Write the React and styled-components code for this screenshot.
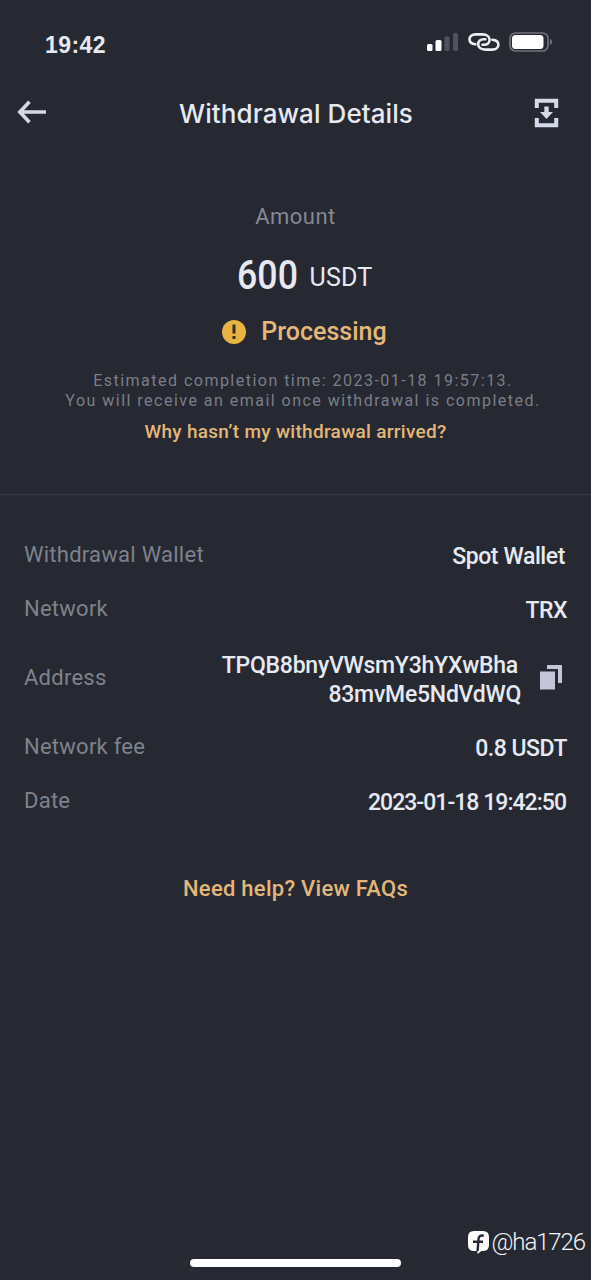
import styled, { createGlobalStyle } from "styled-components";

const GlobalStyle = createGlobalStyle`
  * {
    box-sizing: border-box;
  }
  body {
    margin: 0;
    background: #262932;
  }
  p, h1 {
    margin: 0;
  }
  svg {
    display: block;
    flex: none;
  }
`;

const Screen = styled.main`
  display: flex;
  flex-direction: column;
  width: 591px;
  height: 1280px;
  overflow: hidden;
  background: #262932;
  color: #e6e9f1;
  font-family: Roboto, "Liberation Sans", sans-serif;
  white-space: nowrap;
`;

const StatusBar = styled.div`
  display: flex;
  align-items: center;
  justify-content: space-between;
  height: 84px;
  padding: 0 38px 0 45px;
`;

const Clock = styled.span`
  padding-top: 6px;
  font: 700 23px "Liberation Sans", sans-serif;
  letter-spacing: 0.45px;
`;

const StatusIcons = styled.div`
  display: flex;
  align-items: center;
  gap: 9px;
`;

const Header = styled.header`
  display: flex;
  align-items: center;
  justify-content: space-between;
  height: 58px;
  padding: 0 31px 0 17px;
`;

const Title = styled.h1`
  padding-left: 11px;
  font: 500 26px Inter, sans-serif;
  letter-spacing: 0.07px;
`;

const IconButton = styled.button`
  padding: ${(props) => props.$pad || "0 0 2px"};
  border: none;
  background: none;
  color: #d5daea;
`;

const Summary = styled.section`
  display: flex;
  flex-direction: column;
  align-items: center;
  height: 353px;
  padding-top: 62px;
  border-bottom: 1px solid #373a43;
`;

const AmountLabel = styled.p`
  font-size: 22px;
  line-height: 26px;
  letter-spacing: 0.45px;
  color: #858894;
`;

const Amount = styled.p`
  display: flex;
  align-items: center;
  gap: 12px;
  margin-top: 20px;
  padding-left: 18px;
  line-height: 50px;
`;

/* condensed numerals: the negative margin takes up the squeezed width */
const Figure = styled.span`
  margin: -3px 0 0 -9px;
  font-size: 41px;
  font-weight: 500;
  transform: scaleX(0.87);
  transform-origin: right;
`;

const Currency = styled.span`
  padding-top: 3px;
  font-size: 25px;
  letter-spacing: 0.2px;
`;

const Status = styled.p`
  display: flex;
  align-items: center;
  gap: 15px;
  margin-top: 12px;
  padding-left: 18px;
  font-size: 25px;
  font-weight: 500;
  line-height: 34px;
  color: #e5b779;
`;

const Hint = styled.p`
  margin-top: 22px;
  padding-left: 15px;
  text-align: center;
  font-size: 16px;
  line-height: 20px;
  letter-spacing: 1.48px;
  color: #7b7e88;
`;

const Link = styled.a`
  margin-top: ${(props) => props.$top};
  align-self: center;
  font-size: ${(props) => props.$size};
  font-weight: 500;
  line-height: 26px;
  letter-spacing: ${(props) => props.$spacing};
  color: #e3b67a;
`;

const Details = styled.dl`
  display: flex;
  flex-direction: column;
  margin: 0;
  padding: 33px 24px 0;
`;

const Row = styled.div`
  display: flex;
  align-items: center;
  justify-content: space-between;
  height: ${(props) => (props.$tall ? "83px" : "54.5px")};
`;

const Label = styled.dt`
  padding-bottom: 2px;
  font-size: 22px;
  letter-spacing: 0.25px;
  color: #7f828c;
`;

const Value = styled.dd`
  display: flex;
  align-items: center;
  gap: 19px;
  margin: 0;
  padding: 2px ${(props) => props.$inset || "0"} 0 0;
  font-size: 23px;
  font-weight: 500;
  line-height: 29px;
  letter-spacing: ${(props) => props.$spacing || "-0.5px"};
  text-align: right;
`;

const AddressLine = styled.span`
  display: block;

  &:first-child {
    padding-right: 3px;
  }
`;

const CopyButton = styled(IconButton)`
  margin-right: 5px;
`;

const Footer = styled.footer`
  display: flex;
  flex-direction: column;
  margin-top: auto;
`;

const Credit = styled.div`
  display: flex;
  align-items: center;
  align-self: flex-end;
  gap: 2px;
  padding-right: 6px;
  font: 300 24px/30px Roboto, sans-serif;
  letter-spacing: -1.1px;
  color: #f4f5f8;
`;

const HomeBar = styled.div`
  width: 211px;
  height: 8px;
  margin: 2px 0 13px 190px;
  border-radius: 4px;
  background: #fff;
`;

function SignalIcon() {
  return (
    <svg width="32" height="19" viewBox="0 0 32 19">
      <rect x="0" y="11" width="5.5" height="7" rx="1.5" fill="#fff" />
      <rect x="8.5" y="7" width="6" height="11" rx="1.5" fill="#fff" />
      <rect x="17.5" y="3.5" width="5" height="14.5" rx="1.5" fill="#50535c" />
      <rect x="26" y="0" width="5" height="18" rx="1.5" fill="#50535c" />
    </svg>
  );
}

function ChainIcon() {
  return (
    <svg
      width="32"
      height="18"
      viewBox="0 0 32 18"
      fill="none"
      stroke="#eceef4"
      strokeWidth="2.6"
      strokeLinecap="round"
    >
      <path d="M7.5 11.3C3.8 11 1.5 9 1.5 6.3C1.5 3.3 4 1.4 7.5 1.4H14.5C18.8 1.4 21.6 3.7 21.6 6.8C21.6 9.9 19.3 11.8 16 11.8H14.5" />
      <path d="M24.3 6.7C28 7 30.4 9 30.4 11.7C30.4 14.7 27.8 16.6 24.3 16.6H17.3C13 16.6 10.2 14.3 10.2 11.2C10.2 8.1 12.5 6.2 15.8 6.2H17.3" />
    </svg>
  );
}

function BatteryIcon() {
  return (
    <svg width="44" height="20" viewBox="0 0 44 20">
      <rect x="1" y="1" width="38" height="18" rx="5.5" fill="none" stroke="#70737c" strokeWidth="1.7" />
      <rect x="3" y="3" width="31.5" height="14" rx="3.5" fill="#fff" />
      <path d="M41 7C43.8 8 43.8 12 41 13Z" fill="#70737c" />
    </svg>
  );
}

function BackIcon() {
  return (
    <svg width="30" height="24" viewBox="0 0 30 24" fill="none" stroke="currentColor" strokeWidth="3.6">
      <path d="M12.5 1.8L2.8 12L12.5 22.2M3 12H29" />
    </svg>
  );
}

function SaveIcon() {
  return (
    <svg width="26" height="30" viewBox="0 0 26 30">
      <path
        d="M2.8 10V2.8H22.2V10M2.8 20V27.2H22.2V20"
        fill="none"
        stroke="currentColor"
        strokeWidth="4"
      />
      <path d="M10.3 8.5H14.7V14H19L12.5 21L6 14H10.3Z" fill="currentColor" />
    </svg>
  );
}

function PendingIcon() {
  return (
    <svg width="24" height="24" viewBox="0 0 24 24">
      <circle cx="12" cy="12" r="12" fill="#e8b340" />
      <path d="M10.5 4.5H13.5V13.5H10.5ZM10.5 16H13.5V19H10.5Z" fill="#30302f" />
    </svg>
  );
}

function CopyIcon() {
  return (
    <svg width="22" height="25" viewBox="0 0 22 25" fill="#c3c6d8">
      <path d="M7 0H22V18H18V4H7Z" />
      <rect x="0" y="6.5" width="15" height="18" />
    </svg>
  );
}

function CreditLogo() {
  return (
    <svg width="21" height="23" viewBox="0 0 21 23">
      <path
        d="M6 0H15Q21 0 21 6V14Q21 19.5 15.5 20H13.5L9.5 23V20H6Q0 20 0 14V6Q0 0 6 0Z"
        fill="#fff"
      />
      <path
        d="M15.8 4.8C12.3 3.8 10.9 5 10.5 8L9.6 20M5 10.7H15"
        fill="none"
        stroke="#262932"
        strokeWidth="2.4"
      />
    </svg>
  );
}

const details = [
  {
    label: "Withdrawal Wallet",
    value: "Spot Wallet",
    spacing: "-0.4px",
    inset: "2px",
  },
  { label: "Network", value: "TRX" },
  {
    label: "Address",
    value: ["TPQB8bnyVWsmY3hYXwBha", "83mvMe5NdVdWQ"],
    spacing: "-0.25px",
  },
  { label: "Network fee", value: "0.8 USDT" },
  { label: "Date", value: "2023-01-18 19:42:50", spacing: "-0.97px", inset: "1px" },
];

function DetailRow({ label, value, spacing, inset }) {
  const isAddress = Array.isArray(value);

  return (
    <Row $tall={isAddress}>
      <Label>{label}</Label>
      <Value $spacing={spacing} $inset={inset}>
        {isAddress ? (
          <>
            <div>
              {value.map((line) => (
                <AddressLine key={line}>{line}</AddressLine>
              ))}
            </div>
            <CopyButton aria-label="Copy address" $pad="0 0 4px">
              <CopyIcon />
            </CopyButton>
          </>
        ) : (
          value
        )}
      </Value>
    </Row>
  );
}

function App() {
  return (
    <Screen>
      <GlobalStyle />
      <StatusBar>
        <Clock>19:42</Clock>
        <StatusIcons>
          <SignalIcon />
          <ChainIcon />
          <BatteryIcon />
        </StatusIcons>
      </StatusBar>
      <Header>
        <IconButton aria-label="Back">
          <BackIcon />
        </IconButton>
        <Title>Withdrawal Details</Title>
        <IconButton aria-label="Save" $pad="0">
          <SaveIcon />
        </IconButton>
      </Header>
      <Summary>
        <AmountLabel>Amount</AmountLabel>
        <Amount>
          <Figure>600</Figure>
          <Currency>USDT</Currency>
        </Amount>
        <Status>
          <PendingIcon />
          Processing
        </Status>
        <Hint>
          Estimated completion time: 2023-01-18 19:57:13.
          <br />
          You will receive an email once withdrawal is completed.
        </Hint>
        <Link $top="8px" $size="19px" $spacing="0.3px">
          Why hasn’t my withdrawal arrived?
        </Link>
      </Summary>
      <Details>
        {details.map((item) => (
          <DetailRow key={item.label} {...item} />
        ))}
      </Details>
      <Link $top="47px" $size="22px" $spacing="0.27px">
        Need help? View FAQs
      </Link>
      <Footer>
        <Credit>
          <CreditLogo />
          @ha1726
        </Credit>
        <HomeBar />
      </Footer>
    </Screen>
  );
}

export default App;
